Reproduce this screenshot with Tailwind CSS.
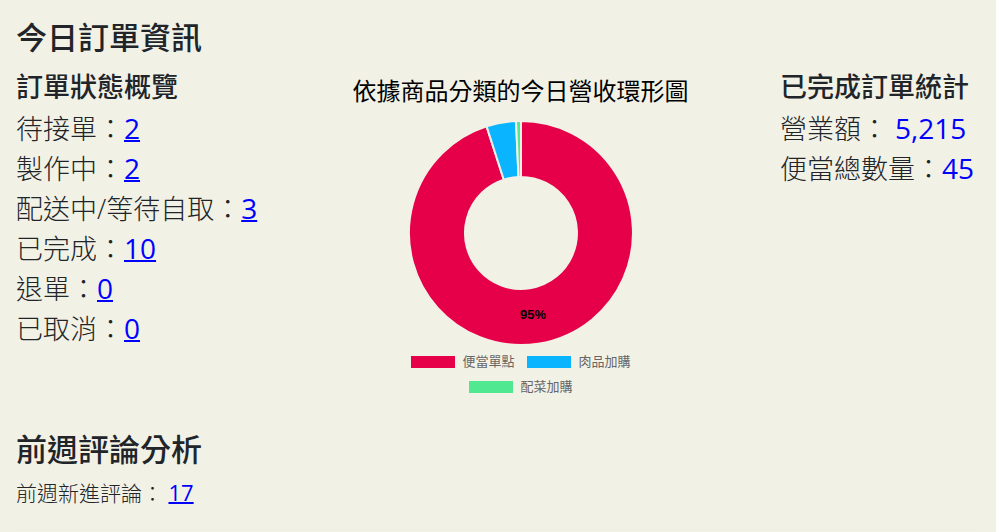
<!DOCTYPE html>
<html lang="zh-Hant">
<head>
<meta charset="utf-8">
<meta name="viewport" content="width=device-width, initial-scale=1">
<title>今日訂單資訊</title>
<script src="https://cdn.jsdelivr.net/npm/@tailwindcss/browser@4"></script>
</head>
<body class="bg-[#f2f1e6] px-4 pt-[15px] text-[#212529] font-['Open_Sans','Noto_Sans_CJK_TC',sans-serif]">
<main>
  <section>
    <h1 class="mb-2 text-[31px] leading-11 font-medium">今日訂單資訊</h1>
    <div class="flex items-start justify-between">
      <div>
        <h2 class="mb-0.5 text-[27px] leading-10 font-medium">訂單狀態概覽</h2>
        <ul class="text-[27px] leading-10 font-light">
          <li>待接單：<a href="#pending" class="text-[28px] leading-none font-medium text-[#0000ff] underline decoration-2">2</a></li>
          <li>製作中：<a href="#making" class="text-[28px] leading-none font-medium text-[#0000ff] underline decoration-2">2</a></li>
          <li>配送中/等待自取：<a href="#delivery" class="text-[28px] leading-none font-medium text-[#0000ff] underline decoration-2">3</a></li>
          <li>已完成：<a href="#done" class="text-[28px] leading-none font-medium text-[#0000ff] underline decoration-2">10</a></li>
          <li>退單：<a href="#returned" class="text-[28px] leading-none font-medium text-[#0000ff] underline decoration-2">0</a></li>
          <li>已取消：<a href="#cancelled" class="text-[28px] leading-none font-medium text-[#0000ff] underline decoration-2">0</a></li>
        </ul>
      </div>
      <figure class="flex flex-col items-center pt-1 pl-1">
        <figcaption class="text-[24px] leading-10 text-black">依據商品分類的今日營收環形圖</figcaption>
        <svg class="mt-2.5 size-[224px]" viewBox="-112 -112 224 224" role="img" aria-label="便當單點 95%">
          <g stroke="#f2f1e6" stroke-width="2" stroke-linejoin="round">
            <path fill="#e60049" d="M0-112A112 112 0 1 1-34.4-106.6L-17.2-53.3A56 56 0 1 0 0-56Z"/>
            <path fill="#0bb4ff" d="M-34.4-106.6A112 112 0 0 1-5-111.9L-2.5-56A56 56 0 0 0-17.2-53.3Z"/>
            <path fill="#50e991" d="M-5-111.9A112 112 0 0 1 0-112V-56A56 56 0 0 0-2.5-56Z"/>
          </g>
          <text x="12" y="86" text-anchor="middle" class="fill-black text-[13px] font-bold font-['Liberation_Sans',sans-serif]">95%</text>
        </svg>
        <ul class="mt-1 flex w-60 flex-wrap justify-center gap-x-3 text-[13px] leading-[25px] text-[#666666]">
          <li class="flex items-center gap-2"><span class="h-3 w-11 bg-[#e60049]"></span>便當單點</li>
          <li class="flex items-center gap-2"><span class="h-3 w-11 bg-[#0bb4ff]"></span>肉品加購</li>
          <li class="flex items-center gap-2"><span class="h-3 w-11 bg-[#50e991]"></span>配菜加購</li>
        </ul>
      </figure>
      <div class="pr-1.5">
        <h2 class="mb-0.5 text-[27px] leading-10 font-medium">已完成訂單統計</h2>
        <p class="text-[27px] leading-10 font-light">營業額： <span class="text-[28px] leading-none font-medium text-[#0000ff]">5,215</span></p>
        <p class="text-[27px] leading-10 font-light">便當總數量：<span class="text-[28px] leading-none font-medium text-[#0000ff]">45</span></p>
      </div>
    </div>
  </section>
  <section class="mt-7">
    <h1 class="mb-2 text-[31px] leading-11 font-medium">前週評論分析</h1>
    <p class="text-[21px] leading-7 font-light">前週新進評論： <a href="#reviews" class="text-[22px] leading-none font-medium text-[#0000ff] underline decoration-2">17</a></p>
  </section>
  <hr class="mt-[22px] border-[#efeee3]">
</main>
</body>
</html>
